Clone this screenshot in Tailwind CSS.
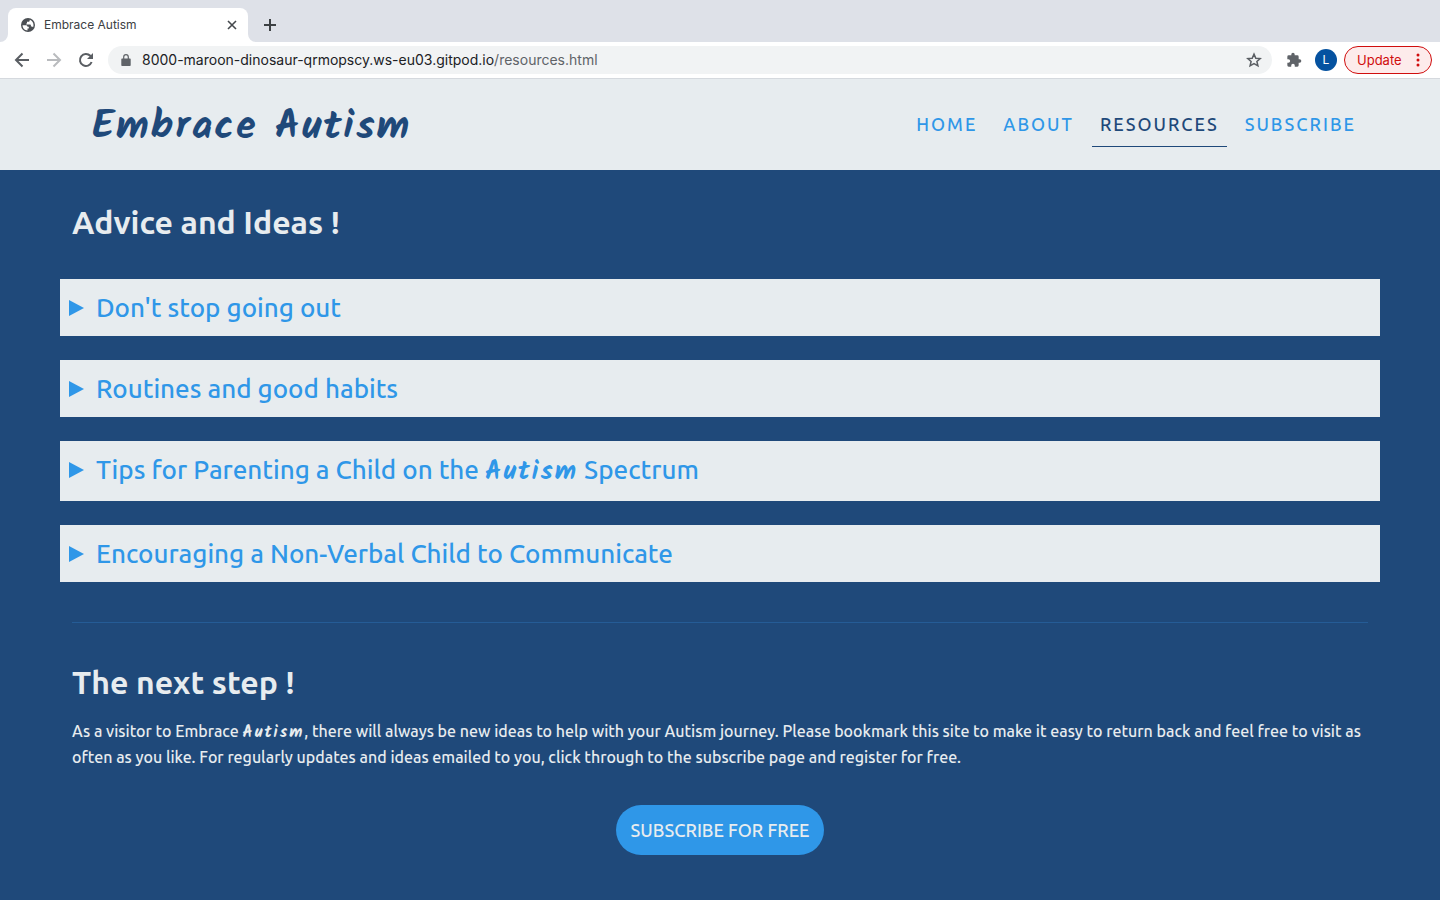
<!DOCTYPE html>
<html lang="en">
<head>
<meta charset="utf-8">
<meta name="viewport" content="width=device-width, initial-scale=1">
<title>Embrace Autism</title>
<script src="https://cdn.jsdelivr.net/npm/@tailwindcss/browser@4"></script>
</head>
<body class="flex min-h-screen flex-col bg-[#1f497a] font-['Ubuntu','Noto_Sans',sans-serif] font-medium text-[#e7ecef]">

<!-- Browser window -->
<div class="font-['Inter',sans-serif] font-normal text-[#202124]">
  <div class="flex h-[42px] items-end bg-[#dee1e8]">
    <svg class="h-2 w-2 shrink-0" viewBox="0 0 8 8" aria-hidden="true"><path d="M8 0v8H0a8 8 0 0 0 8-8z" fill="#fff"/></svg>
    <div class="flex h-[34px] w-60 items-center rounded-t-lg bg-white pl-3 pr-2.5 text-xs text-[#3c4043]">
      <svg class="mr-2 size-4" viewBox="0 0 16 16" aria-hidden="true"><circle cx="8" cy="8" r="7" fill="#4b4f54"/><path d="M2.500 8.200h3.300c1 0 1.700.7 1.700 1.600h1.300v1.600H7.500v2.100A5.500 5.500 0 0 1 2.500 8.200zM9.700 2.800v.6c0 .8-.6 1.300-1.400 1.300H7v1.200c0 .4-.3.7-.7.700v1h3.600c.6 0 1 .4 1 1v.9h1c.5 0 .9.3 1.100.7.400-.7.500-1.400.5-2.200 0-2.400-1.600-4.400-3.800-5.200z" fill="#fff"/></svg>
      <span class="flex-1">Embrace Autism</span>
      <button aria-label="Close tab" class="flex size-3 items-center justify-center"><svg class="size-3" viewBox="0 0 12 12" fill="none" stroke="#45494d" stroke-width="1.600" aria-hidden="true"><path d="M2 2l8 8M10 2l-8 8"/></svg></button>
    </div>
    <svg class="h-2 w-2 shrink-0" viewBox="0 0 8 8" aria-hidden="true"><path d="M0 0v8h8a8 8 0 0 1-8-8z" fill="#fff"/></svg>
    <button aria-label="New tab" class="flex h-[34px] w-7 items-center justify-center"><svg class="size-3.5" viewBox="0 0 14 14" fill="none" stroke="#3c4043" stroke-width="2" aria-hidden="true"><path d="M7 1v12M1 7h12"/></svg></button>
  </div>
  <div class="flex h-[37px] items-center border-b border-[#d5d9de] bg-white pl-3.5 pr-2 text-sm">
    <button aria-label="Back" class="mr-4"><svg class="size-4" viewBox="0 0 16 16" fill="none" stroke="#5a5e63" stroke-width="2" aria-hidden="true"><path d="M15 8H2.500M8.500 1.500L2 8l6.500 6.500"/></svg></button>
    <button aria-label="Forward" class="mr-4"><svg class="size-4" viewBox="0 0 16 16" fill="none" stroke="#b9bbbe" stroke-width="2" aria-hidden="true"><path d="M1 8h12.500M7.500 1.500L14 8l-6.500 6.500"/></svg></button>
    <button aria-label="Reload" class="mr-3.5"><svg class="size-4" viewBox="0 0 16 16" aria-hidden="true"><path d="M13.600 10A6 6 0 1 1 12.300 3.800L14 5.500" fill="none" stroke="#5a5e63" stroke-width="2"/><path d="M15 1v6H9z" fill="#5a5e63"/></svg></button>
    <div class="flex h-7 flex-1 items-center rounded-full bg-[#f1f3f4] pl-3 pr-2.5">
      <svg class="mr-2.5 h-3 w-3 shrink-0" viewBox="0 0 12 12" aria-hidden="true"><path d="M2 4.500h8a.7.7 0 0 1 .7.700v6a.8.8 0 0 1-.8.800H2.100a.8.8 0 0 1-.8-.8v-6a.7.7 0 0 1 .7-.7z" fill="#5f6368"/><path d="M3.700 5V3a2.300 2.300 0 0 1 4.600 0v2" fill="none" stroke="#5f6368" stroke-width="1.200"/></svg>
      <div role="textbox" contenteditable="true" spellcheck="false" aria-label="Address" class="flex-1 whitespace-nowrap">8000-maroon-dinosaur-qrmopscy.ws-eu03.gitpod.io<span class="text-[#5f6368]">/resources.html</span></div>
      <button aria-label="Bookmark this page"><svg class="size-4" viewBox="0 0 16 16" fill="none" stroke="#5a5e63" stroke-width="1.500" aria-hidden="true"><path d="M8 2.100l1.800 4.100 4.400.4-3.300 2.900 1 4.300L8 11.500l-3.900 2.300 1-4.300-3.300-2.900 4.400-.4z"/></svg></button>
    </div>
    <button aria-label="Extensions" class="ml-3.5"><svg class="size-4" viewBox="0 0 24 24" fill="#5f6368" aria-hidden="true"><path d="M20.500 11H19V7a2 2 0 0 0-2-2h-4V3.500a2.500 2.500 0 0 0-5 0V5H4a2 2 0 0 0-2 2v3.800h1.500a2.700 2.700 0 0 1 0 5.400H2V20a2 2 0 0 0 2 2h3.800v-1.500a2.700 2.700 0 0 1 5.400 0V22H17a2 2 0 0 0 2-2v-4h1.500a2.500 2.500 0 0 0 0-5z"/></svg></button>
    <button aria-label="Profile" class="ml-[13px] flex size-[22px] items-center justify-center rounded-full bg-[#0552a0] text-xs text-white">L</button>
    <button class="ml-[7px] flex h-7 w-[88px] items-center justify-between rounded-full border border-[#d00d0d] bg-[#fdebeb] pl-3 pr-[11px] text-[13px] text-[#d00d0d]">Update<svg class="h-4 w-1" viewBox="0 0 4 16" fill="#d00d0d" aria-hidden="true"><circle cx="2" cy="3" r="1.500"/><circle cx="2" cy="8" r="1.500"/><circle cx="2" cy="13" r="1.500"/></svg></button>
  </div>
</div>

<!-- Site header -->
<header class="flex h-[91px] items-center justify-between bg-[#e7ecef] pl-[92px] pr-[76px]">
  <a href="#" class="pt-1 font-['Kalam','Lato',cursive] text-[40px] font-bold leading-none tracking-[2px] text-[#1f497a]">Embrace Autism</a>
  <nav class="flex gap-2.5 text-lg leading-6 tracking-[2px] text-[#2f97e8]">
    <a href="#" class="border-b border-transparent px-2 py-2.5">HOME</a>
    <a href="#" class="border-b border-transparent px-2 py-2.5">ABOUT</a>
    <a href="#" aria-current="page" class="border-b border-[#1f497a] px-2 py-2.5 text-[#1f497a]">RESOURCES</a>
    <a href="#" class="border-b border-transparent px-2 py-2.5">SUBSCRIBE</a>
  </nav>
</header>

<main class="px-[60px] pt-8">
  <h1 class="px-3 text-[32px] font-bold leading-10">Advice and Ideas !</h1>
  <div class="mt-[37px] flex flex-col gap-6 text-[26px] leading-10 text-[#2f97e8]">
    <details class="bg-[#e7ecef]"><summary class="flex h-[57px] items-center gap-3 px-2"><svg class="h-[18px] w-4" viewBox="0 0 16 18" fill="currentColor" aria-hidden="true"><path d="M1 1v16l15-8z"/></svg><span>Don't stop going out</span></summary></details>
    <details class="bg-[#e7ecef]"><summary class="flex h-[57px] items-center gap-3 px-2"><svg class="h-[18px] w-4" viewBox="0 0 16 18" fill="currentColor" aria-hidden="true"><path d="M1 1v16l15-8z"/></svg><span>Routines and good habits</span></summary></details>
    <details class="bg-[#e7ecef] pb-[3px]"><summary class="flex h-[57px] items-center gap-3 px-2"><svg class="h-[18px] w-4" viewBox="0 0 16 18" fill="currentColor" aria-hidden="true"><path d="M1 1v16l15-8z"/></svg><span>Tips for Parenting a Child on the <span class="font-['Kalam','Lato',cursive] font-bold leading-none tracking-[2px]">Autism</span> Spectrum</span></summary></details>
    <details class="bg-[#e7ecef]"><summary class="flex h-[57px] items-center gap-3 px-2"><svg class="h-[18px] w-4" viewBox="0 0 16 18" fill="currentColor" aria-hidden="true"><path d="M1 1v16l15-8z"/></svg><span>Encouraging a Non-Verbal Child to Communicate</span></summary></details>
  </div>
  <hr class="mx-3 mt-10 border-[#255c96]">
  <section class="px-3 pt-[39px]">
    <h2 class="text-[32px] font-bold leading-10">The next step !</h2>
    <p class="mt-4 text-base leading-[26px]">As a visitor to Embrace <span class="font-['Kalam','Lato',cursive] font-bold leading-none tracking-[2px]">Autism</span>, there will always be new ideas to help with your Autism journey. Please bookmark this site to make it easy to return back and feel free to visit as often as you like. For regularly updates and ideas emailed to you, click through to the subscribe page and register for free.</p>
    <div class="mt-[35px] flex justify-center">
      <button class="h-[50px] rounded-full bg-[#2f97e8] px-[15px] text-lg">SUBSCRIBE FOR FREE</button>
    </div>
  </section>
</main>
</body>
</html>
